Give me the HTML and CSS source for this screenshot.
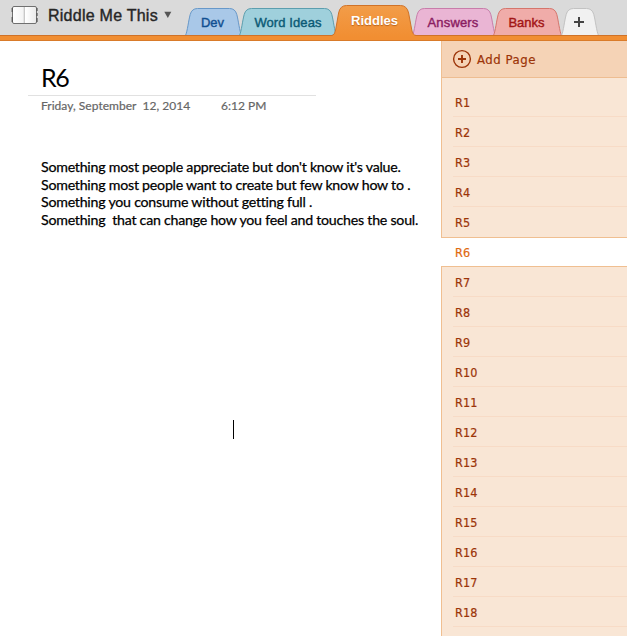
FILE: index.html
```
<!DOCTYPE html>
<html lang="en">
<head>
<meta charset="utf-8">
<title>Riddle Me This</title>
<link rel="stylesheet" href="styles.css">
</head>
<body>
<div class="app">
  <header class="topbar">
    <div class="notebook">
      <svg class="book" width="28" height="20" viewBox="0 0 28 20">
        <defs><linearGradient id="paper"><stop offset="0" stop-color="#fff"/><stop offset=".42" stop-color="#f4f4f4"/><stop offset=".5" stop-color="#d2d2d2"/><stop offset=".54" stop-color="#fff"/><stop offset="1" stop-color="#e9e9e9"/></linearGradient></defs>
        <rect x="1.500" y="1.500" width="24" height="17" rx="1.500" fill="url(#paper)" stroke="#707070"/>
        <path d="M13.500 2v16" stroke="#c4c4c4" stroke-width=".7"/>
        <path d="M1.200 3v4M1.200 12v5M26 3v3M26 8v3M26 13v4" stroke="#555" stroke-width="1.200"/>
      </svg>
      <span class="name">Riddle Me This</span>
      <svg class="caret" width="8" height="8" viewBox="0 0 8 8"><path d="M0.3 0.7h7L3.8 7z" fill="#555"/></svg>
    </div>
    <nav class="tabs">
      <a class="tab dev"><svg width="57" height="28" viewBox="0 0 57 28"><path d="M.5 27.500C2.500 23 3.400 13 5.200 6.500Q6.800.5 12.500.5H44.500Q50.200.5 51.800 6.500C53.500 13 54.500 23 56.500 27.500"/></svg><span>Dev</span></a>
      <a class="tab words"><svg width="98" height="28" viewBox="0 0 98 28"><path d="M.5 27.500C2.500 23 3.400 13 5.200 6.500Q6.800.5 12.500.5H85.500Q91.200.5 92.800 6.500C94.500 13 95.500 23 97.500 27.500"/></svg><span>Word Ideas</span></a>
      <a class="tab active"><svg width="84" height="32" viewBox="0 0 84 32"><defs><linearGradient id="or" x2="0" y2="1"><stop stop-color="#f29d49"/><stop offset="1" stop-color="#f18e32"/></linearGradient></defs><path class="shape" d="M0 30.500Q2.800 30 3.600 25L6.600 8Q8 .5 14.500.5H68.500Q75 .5 76.600 8L79.800 25Q80.600 30 84 30.500V32H0z" fill="url(#or)"/><path class="edge" d="M0 30.500Q2.800 30 3.600 25L6.600 8Q8 .5 14.500.5H68.500Q75 .5 76.600 8L79.800 25Q80.600 30 84 30.500"/></svg><span>Riddles</span></a>
      <a class="tab answers"><svg width="84" height="28" viewBox="0 0 84 28"><path d="M.5 27.500C2.500 23 3.400 13 5.200 6.500Q6.800.5 12.500.5H71.500Q77.200.5 78.800 6.500C80.500 13 81.500 23 83.500 27.500"/></svg><span>Answers</span></a>
      <a class="tab banks"><svg width="69" height="28" viewBox="0 0 69 28"><path d="M.5 27.500C2.500 23 3.400 13 5.200 6.500Q6.800.5 12.500.5H56.500Q62.200.5 63.800 6.500C65.500 13 66.500 23 68.500 27.500"/></svg><span>Banks</span></a>
      <a class="tab add"><svg width="38" height="28" viewBox="0 0 38 28"><path d="M.5 27.500C2.500 23 3.400 13 5.200 6.500Q6.800.5 12.500.5H25.500Q31.200.5 32.800 6.500C34.500 13 35.500 23 37.500 27.500"/><path class="plus" d="M13 14h10M18 9v10"/></svg></a>
    </nav>
  </header>
  <div class="band"></div>
  <div class="body">
    <main class="page">
      <h1>R6</h1>
      <div class="stamp"><span class="date">Friday, September&nbsp; 12, 2014</span><span class="time">6:12 PM</span></div>
      <div class="note">
        <p>Something most people appreciate but don't know it's value.</p>
        <p>Something most people want to create but few know how to .</p>
        <p>Something you consume without getting full .</p>
        <p>Something&nbsp; that can change how you feel and touches the soul.</p>
      </div>
      <div class="cursor"></div>
    </main>
    <aside class="sidebar">
      <div class="addpage"><svg width="20" height="20" viewBox="0 0 20 20"><circle cx="10" cy="10" r="8.400"/><path d="M6 10h8M10 6v8" stroke-width="1.900"/></svg><span>Add Page</span></div>
      <ul class="pages">
        <li>R1</li><li>R2</li><li>R3</li><li>R4</li><li>R5</li><li class="current">R6</li><li>R7</li><li>R8</li><li>R9</li><li>R10</li><li>R11</li><li>R12</li><li>R13</li><li>R14</li><li>R15</li><li>R16</li><li>R17</li><li>R18</li>
      </ul>
    </aside>
  </div>
</div>
</body>
</html>
```
FILE: styles.css
```
* { box-sizing: border-box; }
body { margin: 0; background: #fff; font-family: "Liberation Sans", sans-serif; }
.app { width: 627px; height: 636px; overflow: hidden; display: flex; flex-direction: column; }
.topbar { height: 36px; flex: none; background: #dadada; display: flex; align-items: flex-end; position: relative; }
.notebook { width: 185px; height: 36px; flex: none; display: flex; align-items: flex-start; padding: 5px 0 0 11px; }
.book { flex: none; }
.name { font-size: 16px; line-height: 20px; margin-top: 1px; color: #262626; margin-left: 9px; white-space: nowrap; letter-spacing: .25px; -webkit-text-stroke: .4px #262626; }
.caret { margin: 6px 0 0 6px; flex: none; }
.tabs { display: flex; align-items: flex-end; height: 36px; }
.tab { display: grid; flex: none; margin-right: -2px; font-size: 13px; line-height: 16px; white-space: nowrap; }
.tab svg, .tab span { grid-area: 1 / 1; }
.tab svg { display: block; }
.tab span { justify-self: center; align-self: center; padding: 1px 2px 0 0; -webkit-text-stroke: .4px currentColor; }
.tab path { stroke-width: 1; }
.dev { color: #114f91; }
.dev path { fill: #a9c8e8; stroke: #6798c9; }
.words { color: #0b5a75; margin-left: -1px; letter-spacing: .1px; }
.words path { fill: #9fd0dc; stroke: #5c9eae; }
.words span { padding-right: 0; }
.active { color: #fff; font-weight: bold; margin: 0 -2px -1px -3px; position: relative; z-index: 2; }
.active .edge { fill: none; stroke: #cf7228; }
.tab.active span { padding: 0 0 0 1px; -webkit-text-stroke: 0; text-shadow: 0 1px 1px #b9641d; }
.answers { color: #8b1d61; margin-left: -2px; letter-spacing: .15px; }
.answers path { fill: #eab5d4; stroke: #c87daa; }
.banks { color: #a31515; margin-left: -1px; }
.banks path { fill: #f0aca9; stroke: #d5756c; }
.add { margin-left: 1px; }
.add path { fill: #f1f1f1; stroke: #c2c2c2; }
.add .plus { fill: none; stroke: #444; stroke-width: 2; }
.band { height: 6px; margin-top: -1px; flex: none; position: relative; z-index: 1; background: #f18e32; border-top: 1px solid #cf7228; border-bottom: 1px solid #d97b2a; }
.body { flex: 1; display: flex; min-height: 0; }
.page { width: 441px; flex: none; font-family: Lato, sans-serif; color: #000; }
h1 { margin: 21px 0 0 28px; width: 288px; height: 34px; padding-left: 13px; font-size: 25px; line-height: 30px; font-weight: 400; border-bottom: 1px solid #e1e1e1; letter-spacing: -1.400px; }
.stamp { padding-left: 41px; margin-top: 2px; display: flex; font-size: 12px; line-height: 16px; color: #666; -webkit-text-stroke: .2px #666; white-space: nowrap; }
.date { width: 180px; letter-spacing: .03px; }
.note { margin: 44px 0 0 41px; height: 71px; font-size: 14.200px; letter-spacing: -.24px; -webkit-text-stroke: .25px #000; }
.note p { margin: 0; line-height: 17.700px; white-space: nowrap; }
.cursor { width: 1px; height: 19px; background: #000; margin: 191px 0 0 233px; }
.sidebar { flex: 1; font-family: "DejaVu Sans Condensed", "DejaVu Sans", sans-serif; color: #9c3408; background: linear-gradient(90deg, #f0bf91 1px, #f9e6d5 1px); -webkit-text-stroke: .2px currentColor; }
.addpage { height: 37px; margin-left: 1px; background: #f5d3b6; border-bottom: 1px solid #eebd91; display: flex; align-items: center; padding-left: 10px; font-size: 13px; letter-spacing: .55px; gap: 5px; }
.addpage svg { fill: none; stroke: #9c3408; stroke-width: 1.400; }
.pages { list-style: none; margin: 9px 0 0; padding: 0; }
.pages li { height: 30px; line-height: 31px; margin-left: 12px; padding-left: 2px; border-bottom: 1px solid #f8dbc6; font-size: 12.500px; letter-spacing: .1px; }
.pages li:nth-child(5) { border-color: transparent; }
.pages .current { margin-left: 0; padding-left: 14px; line-height: 30px; color: #e06a10; background: #fff; border-top: 1px solid #f0bf91; border-bottom: 1px solid #f0bf91; }
```
